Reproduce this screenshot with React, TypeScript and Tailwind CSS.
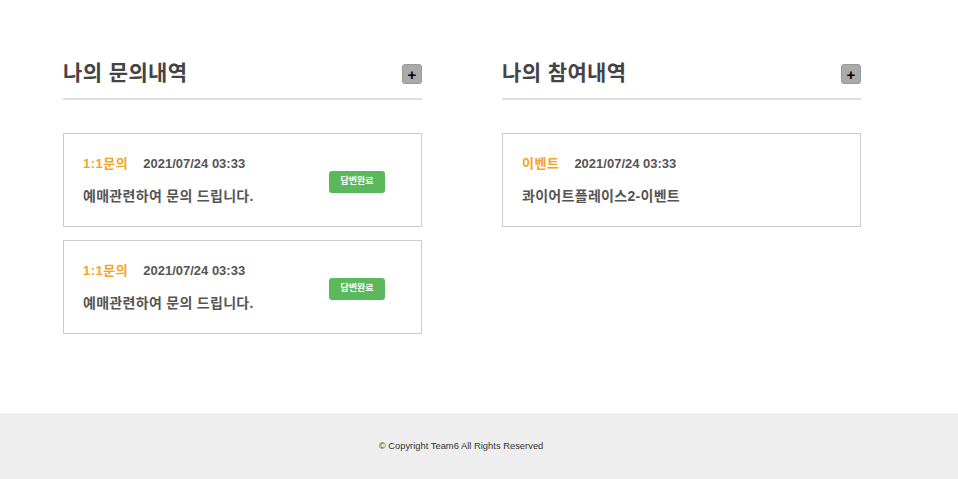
const inquiries = [
  { id: 1, type: "1:1문의", date: "2021/07/24 03:33", title: "예매관련하여 문의 드립니다.", status: "답변완료" },
  { id: 2, type: "1:1문의", date: "2021/07/24 03:33", title: "예매관련하여 문의 드립니다.", status: "답변완료" },
];

const events = [
  { id: 1, type: "이벤트", date: "2021/07/24 03:33", title: "콰이어트플레이스2-이벤트" },
];

const font = { fontFamily: '"Liberation Sans", "Noto Sans CJK KR", sans-serif' };

const SectionHeader = ({ title }: { title: string }) => (
  <div className="flex items-start justify-between h-[38px] border-b-2 border-[#ddd]">
    <h2 className="text-[21px] leading-[20px] font-bold text-[#444] tracking-[0.4px] mt-[1px]">{title}</h2>
    <button className="w-[20px] h-[20px] rounded-[3px] bg-[#aaa] border border-[#999] flex items-center justify-center text-black text-[15px] font-bold leading-none mt-[2px]">
      +
    </button>
  </div>
);

const Card = ({
  type,
  date,
  title,
  status,
}: {
  type: string;
  date: string;
  title: string;
  status?: string;
}) => (
  <div className="h-[94px] border border-[#ccc] bg-white flex items-center justify-between pl-[19px] pr-[36px]">
    <div className="flex flex-col">
      <div className="flex items-center gap-[15px] text-[13px] leading-[20px] font-bold">
        <span className="text-[#f8a21f] tracking-[0.5px]">{type}</span>
        <span className="text-[#555]">{date}</span>
      </div>
      <p className="mt-[12px] text-[14px] leading-[20px] font-bold text-[#555] tracking-[0.3px]">{title}</p>
    </div>
    {status && (
      <span className="mt-[3px] w-[56px] h-[22px] rounded-[3px] bg-[#5cb85c] text-white text-[9px] font-bold flex items-center justify-center">
        {status}
      </span>
    )}
  </div>
);

export default function App() {
  return (
    <div className="w-[958px] min-h-[479px] bg-white flex flex-col" style={font}>
      <main className="flex gap-[80px] pl-[63px] pt-[62px] h-[413px]">
        <section className="w-[359px]">
          <SectionHeader title="나의 문의내역" />
          <div className="mt-[33px] flex flex-col gap-[13px]">
            {inquiries.map((q) => (
              <Card key={q.id} type={q.type} date={q.date} title={q.title} status={q.status} />
            ))}
          </div>
        </section>
        <section className="w-[359px]">
          <SectionHeader title="나의 참여내역" />
          <div className="mt-[33px] flex flex-col gap-[13px]">
            {events.map((e) => (
              <Card key={e.id} type={e.type} date={e.date} title={e.title} />
            ))}
          </div>
        </section>
      </main>
      <footer className="h-[66px] bg-[#eee] flex items-center justify-center pr-[36px] text-[9.4px] text-[#333]">
        © Copyright Team6 All Rights Reserved
      </footer>
    </div>
  );
}
